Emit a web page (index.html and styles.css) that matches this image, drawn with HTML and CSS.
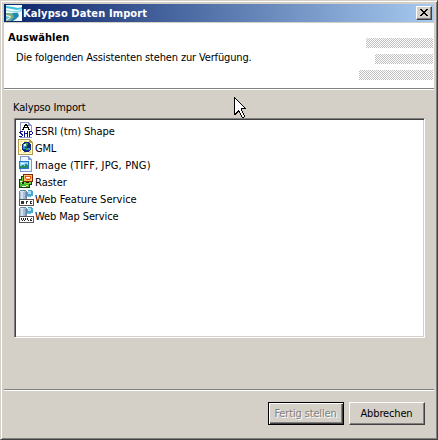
FILE: index.html
```html
<!DOCTYPE html>
<html lang="de">
<head>
<meta charset="utf-8">
<title>Kalypso Daten Import</title>
<link rel="stylesheet" href="styles.css">
</head>
<body>
<div class="window">
  <div class="titlebar">
    <svg class="logo" width="16" height="16" viewBox="0 0 16 16"><path fill="#f2fbfd" d="M0 0h16v16H0z"/><path fill="#3cc0dc" d="M0 1l7 1 5 1 4-1v2l-5 1-5-1-6-1z"/><path fill="#8fdcea" d="M0 5l6 1 6 0 4-2v2l-5 2-6-1-5-1z"/><path fill="#79aa82" d="M0 8h5l4 2-1 3-4 3H0l4-3 1-2-5-1z"/><path fill="#2188b2" d="M6 8l6 0 1 3-3 3-3 2H4l4-4z"/><path fill="#5cc0d8" d="M0 11l4 1-4 3z"/></svg>
    <span class="title">Kalypso Daten Import</span>
    <button class="close" aria-label="Schließen"><svg width="8" height="7" viewBox="0 0 8 7" shape-rendering="crispEdges"><path d="M0 0h2v1h1v1h2V1h1V0h2v1H7v1H6v1H5v1h1v1h1v1h1v1H6V6H5V5H3v1H2v1H0V6h1V5h1V4h1V3H2V2H1V1H0z"/></svg></button>
  </div>
  <div class="header">
    <div><h1>Auswählen</h1><p>Die folgenden Assistenten stehen zur Verfügung.</p></div>
    <div class="bars"><i class="bar b1"></i><i class="bar b2"></i><i class="bar b3"></i></div>
  </div>
  <div class="content">
    <div class="label">Kalypso Import</div>
    <ul class="list">
      <li><svg width="16" height="16" viewBox="0 0 16 16" shape-rendering="crispEdges"><path fill="#fff" d="M2 0h9l3 3v13H2z"/><path fill="#8c96c8" d="M2 0h9v1H3v15H2zM11 1h1v1h1v1h1v13h-1V4h-3V1zM3 15h10v1H3z"/><path fill="#000" d="M7 2h2v1h1v2h1v2h1v1h-2V6H6v2H4V7h1V5h1V3h1zM7 4v1h2V4z"/><path fill="#fff" d="M1 9h13v6H1z"/><path fill="#101090" d="M2 9h3v1H3v1h1v1h1v2H4v1H1v-1h3v-1H3v-1H2v-1H1v-1h1zM6 9h1v2h2V9h1v6H9v-3H7v3H6zM11 9h3v1h1v2h-1v1h-2v2h-1zM12 10v2h2v-2z"/></svg><span class="t1">ESRI (tm) Shape</span></li>
      <li><svg width="16" height="16" viewBox="0 0 16 16" shape-rendering="crispEdges"><path fill="#fffbd0" d="M0 0h12l3 3v13H0z"/><path fill="#b09858" d="M0 0h12v1H1v14h14v1H0zM12 1h1v1h1v1h1v12h-1V4h-3V1z"/><path fill="#f0d860" d="M2 2h2v1H2zM6 2h3v1H6zM2 5h1v2H2zM2 10h1v3H2zM5 13h3v1H5zM11 12h2v2h-2z"/><path fill="#102a80" d="M6 3h5v1h1v1h1v6h-1v1h-1v1H6v-1H5v-1H4V5h1V4h1z"/><path fill="#2e9ad8" d="M5 5h2v5H5zM10 9h2v2h-2z"/><path fill="#38a048" d="M7 4h3v2H9v2H7zM7 9h3v2H8z"/><path fill="#e4f6ff" d="M6 5h2v2H6z"/></svg><span class="t2">GML</span></li>
      <li><svg width="16" height="16" viewBox="0 0 16 16" shape-rendering="crispEdges"><path fill="#eef5ff" d="M2 0h9l3 3v13H2z"/><path fill="#7c9ad0" d="M2 0h9v1H3v14h11v1H2zM11 1h1v1h1v1h1v12h-1V4h-3V1z"/><path fill="#2876c8" d="M1 5h10v8H1z"/><path fill="#8bd9f8" d="M2 6h8v4H2z"/><path fill="#fff" d="M3 7h3v1H3z"/><path fill="#258c65" d="M2 10h2V9h2v1h1V8h2v1h1v3H2z"/></svg><span class="t3">Image (TIFF, JPG, PNG)</span></li>
      <li><svg width="16" height="16" viewBox="0 0 16 16" shape-rendering="crispEdges"><path fill="#183c10" d="M1 6h11v9H1zM3 3h11v9H3z"/><path fill="#42b830" d="M2 7h9v7H2z"/><path fill="#f2e868" d="M3 10h2v1H3zM8 12h2v1H8z"/><path fill="#fff" d="M4 13h4v1H4zM2 8h2v1H2z"/><path fill="#78cc40" d="M4 4h9v7H4z"/><path fill="#7c2808" d="M5 1h10v8H5z"/><path fill="#ffc070" d="M6 2h8v6H6z"/><path fill="#e65314" d="M7 3h6v1H7zM7 4h1v2H7zM12 4h1v2h-1zM8 6h4v1H8z"/><path fill="#fff" d="M8 4h4v1H8z"/><path fill="#143010" d="M4 9h2v2H4zM8 9h3v1H8z"/></svg><span class="t4">Raster</span></li>
      <li><svg width="16" height="16" viewBox="0 0 16 16" shape-rendering="crispEdges"><g id="server"><path fill="#6a84a8" d="M2 0h6v1h1v9H1V1h1z"/><path fill="#a9bcd8" d="M2 1h6v8H2z"/><path fill="#d3e0f0" d="M2 1h4v1H2zM3 2h2v7H3z"/><path fill="#8299bd" d="M7 2h1v7H7z"/><path fill="#48a8d4" d="M10 0h4v1h1v5h-2v1H9V2h1z"/><path fill="#a5e2f5" d="M10 1h3v3h-3z"/><path fill="#78cce4" d="M9 6h3v1H9z"/><path fill="#555" d="M1 9h15v7H1z"/><path fill="#fff" d="M2 10h13v5H2z"/></g><path fill="#333" d="M3 11h3v3H3zM8 11h2v1H9v2H8zM12 11h2v1h-1v1h1v1h-2z"/></svg><span class="t5">Web Feature Service</span></li>
      <li><svg width="16" height="16" viewBox="0 0 16 16" shape-rendering="crispEdges"><use href="#server"/><path fill="#222" d="M3 11h1v2h1v-2h1v2h1v-2h1v2H7v1H6v-1H5v1H4v-1H3zM9 11h1v2h1v1h-1v-1H9zM13 11h1v1h-1v1h1v1h-2v-2h1z"/></svg><span class="t6">Web Map Service</span></li>
    </ul>
  </div>
  <div class="footer">
    <button class="btn default" disabled><span class="finish">Fertig stellen</span></button>
    <button class="btn"><span class="cancel">Abbrechen</span></button>
  </div>
</div>
<svg class="cursor" width="12" height="21" viewBox="0 0 12 21" shape-rendering="crispEdges"><path fill="#000" d="M0 0h1v1h1v1h1v1h1v1h1v1h1v1h1v1h1v1h1v1h1v1h1v1h1v1H8v2h1v2h1v2h1v2h-1v1H8v-1H7v-2H6v-2H5v-1H4v1H3v1H2v1H0z"/><path fill="#fff" d="M1 2h1v1h1v1h1v1h1v1h1v1h1v1h1v1h1v1h1v1H7v3h1v2h1v2h1v2H8v-2H7v-2H6v-2H5v-1H4v1H3v1H2v1H1z"/></svg>
</body>
</html>
```
FILE: styles.css
```css
* { box-sizing: border-box; }
body { margin: 0; background: #d4d0c8; color: #000; font: 11px/13px "DejaVu Sans Condensed", "DejaVu Sans", sans-serif; white-space: nowrap; }
.window { width: 438px; height: 440px; border: 1px solid; border-color: #d4d0c8 #404040 #404040 #d4d0c8; box-shadow: inset 1px 1px #fff, inset -1px -1px #808080; padding: 3px; display: flex; flex-direction: column; }
.titlebar { height: 18px; flex: none; display: flex; align-items: center; padding: 0 2px; background: linear-gradient(90deg, #0a246a, #a6caf0); color: #fff; font-weight: bold; }
.title { letter-spacing: .12px; }
.logo { margin-right: 1px; }
.close { width: 16px; height: 14px; margin-left: auto; padding: 0 1px 1px 0; display: flex; align-items: center; justify-content: center; background: #d4d0c8; border: 1px solid; border-color: #fff #404040 #404040 #fff; box-shadow: inset -1px -1px #808080; }
.header { height: 67px; flex: none; margin-top: 1px; background: #fff; border-bottom: 1px solid #fff; box-shadow: inset 0 -1px #808080; display: flex; justify-content: space-between; padding: 8px 1px 0 4px; }
h1 { font-size: 11px; line-height: 13px; margin: 0; letter-spacing: .1px; }
p { margin: 7px 0 0 8px; letter-spacing: -.15px; }
.bars { display: flex; flex-direction: column; gap: 6px; align-items: flex-end; padding-top: 7px; }
.bar { height: 10px; background: repeating-conic-gradient(#c0c0c0 0 25%, #fff 0 50%) 0 0 / 2px 2px; }
.b1 { width: 67px; }
.b2 { width: 58px; }
.b3 { width: 74px; }
.content { padding: 11px 9px 0 10px; flex: 1; }
.label { height: 17px; margin-left: -1px; letter-spacing: -.14px; }
.list { margin: 0; padding: 3px 2px 2px; list-style: none; height: 220px; background: #fff; border: 1px solid; border-color: #808080 #fff #fff #808080; box-shadow: inset 1px 1px #404040, inset -1px -1px #d4d0c8; }
.list li { height: 17px; display: flex; align-items: flex-start; gap: 1px; padding-left: 1px; }
.list span { padding-top: 3px; }
.t1 { letter-spacing: -.08px; }
.t2 { letter-spacing: -.2px; }
.t3 { letter-spacing: .15px; }
.t6 { letter-spacing: -.12px; }
.footer { height: 47px; flex: none; border-top: 1px solid #808080; box-shadow: inset 0 1px #fff; padding: 12px 9px 0 0; display: flex; justify-content: flex-end; gap: 5px; }
.btn { width: 76px; height: 23px; padding: 0 1px 1px 0; font: inherit; color: #000; background: #d4d0c8; border: 1px solid; border-color: #fff #404040 #404040 #fff; box-shadow: inset -1px -1px #808080; }
.btn.default { border-color: #000; box-shadow: inset 1px 1px #fff, inset -1px -1px #404040, inset -2px -2px #808080; color: #808080; text-shadow: 1px 1px #fff; }
.finish { letter-spacing: -.15px; }
.cancel { letter-spacing: -.15px; }
.cursor { position: absolute; left: 234px; top: 97px; }
```
